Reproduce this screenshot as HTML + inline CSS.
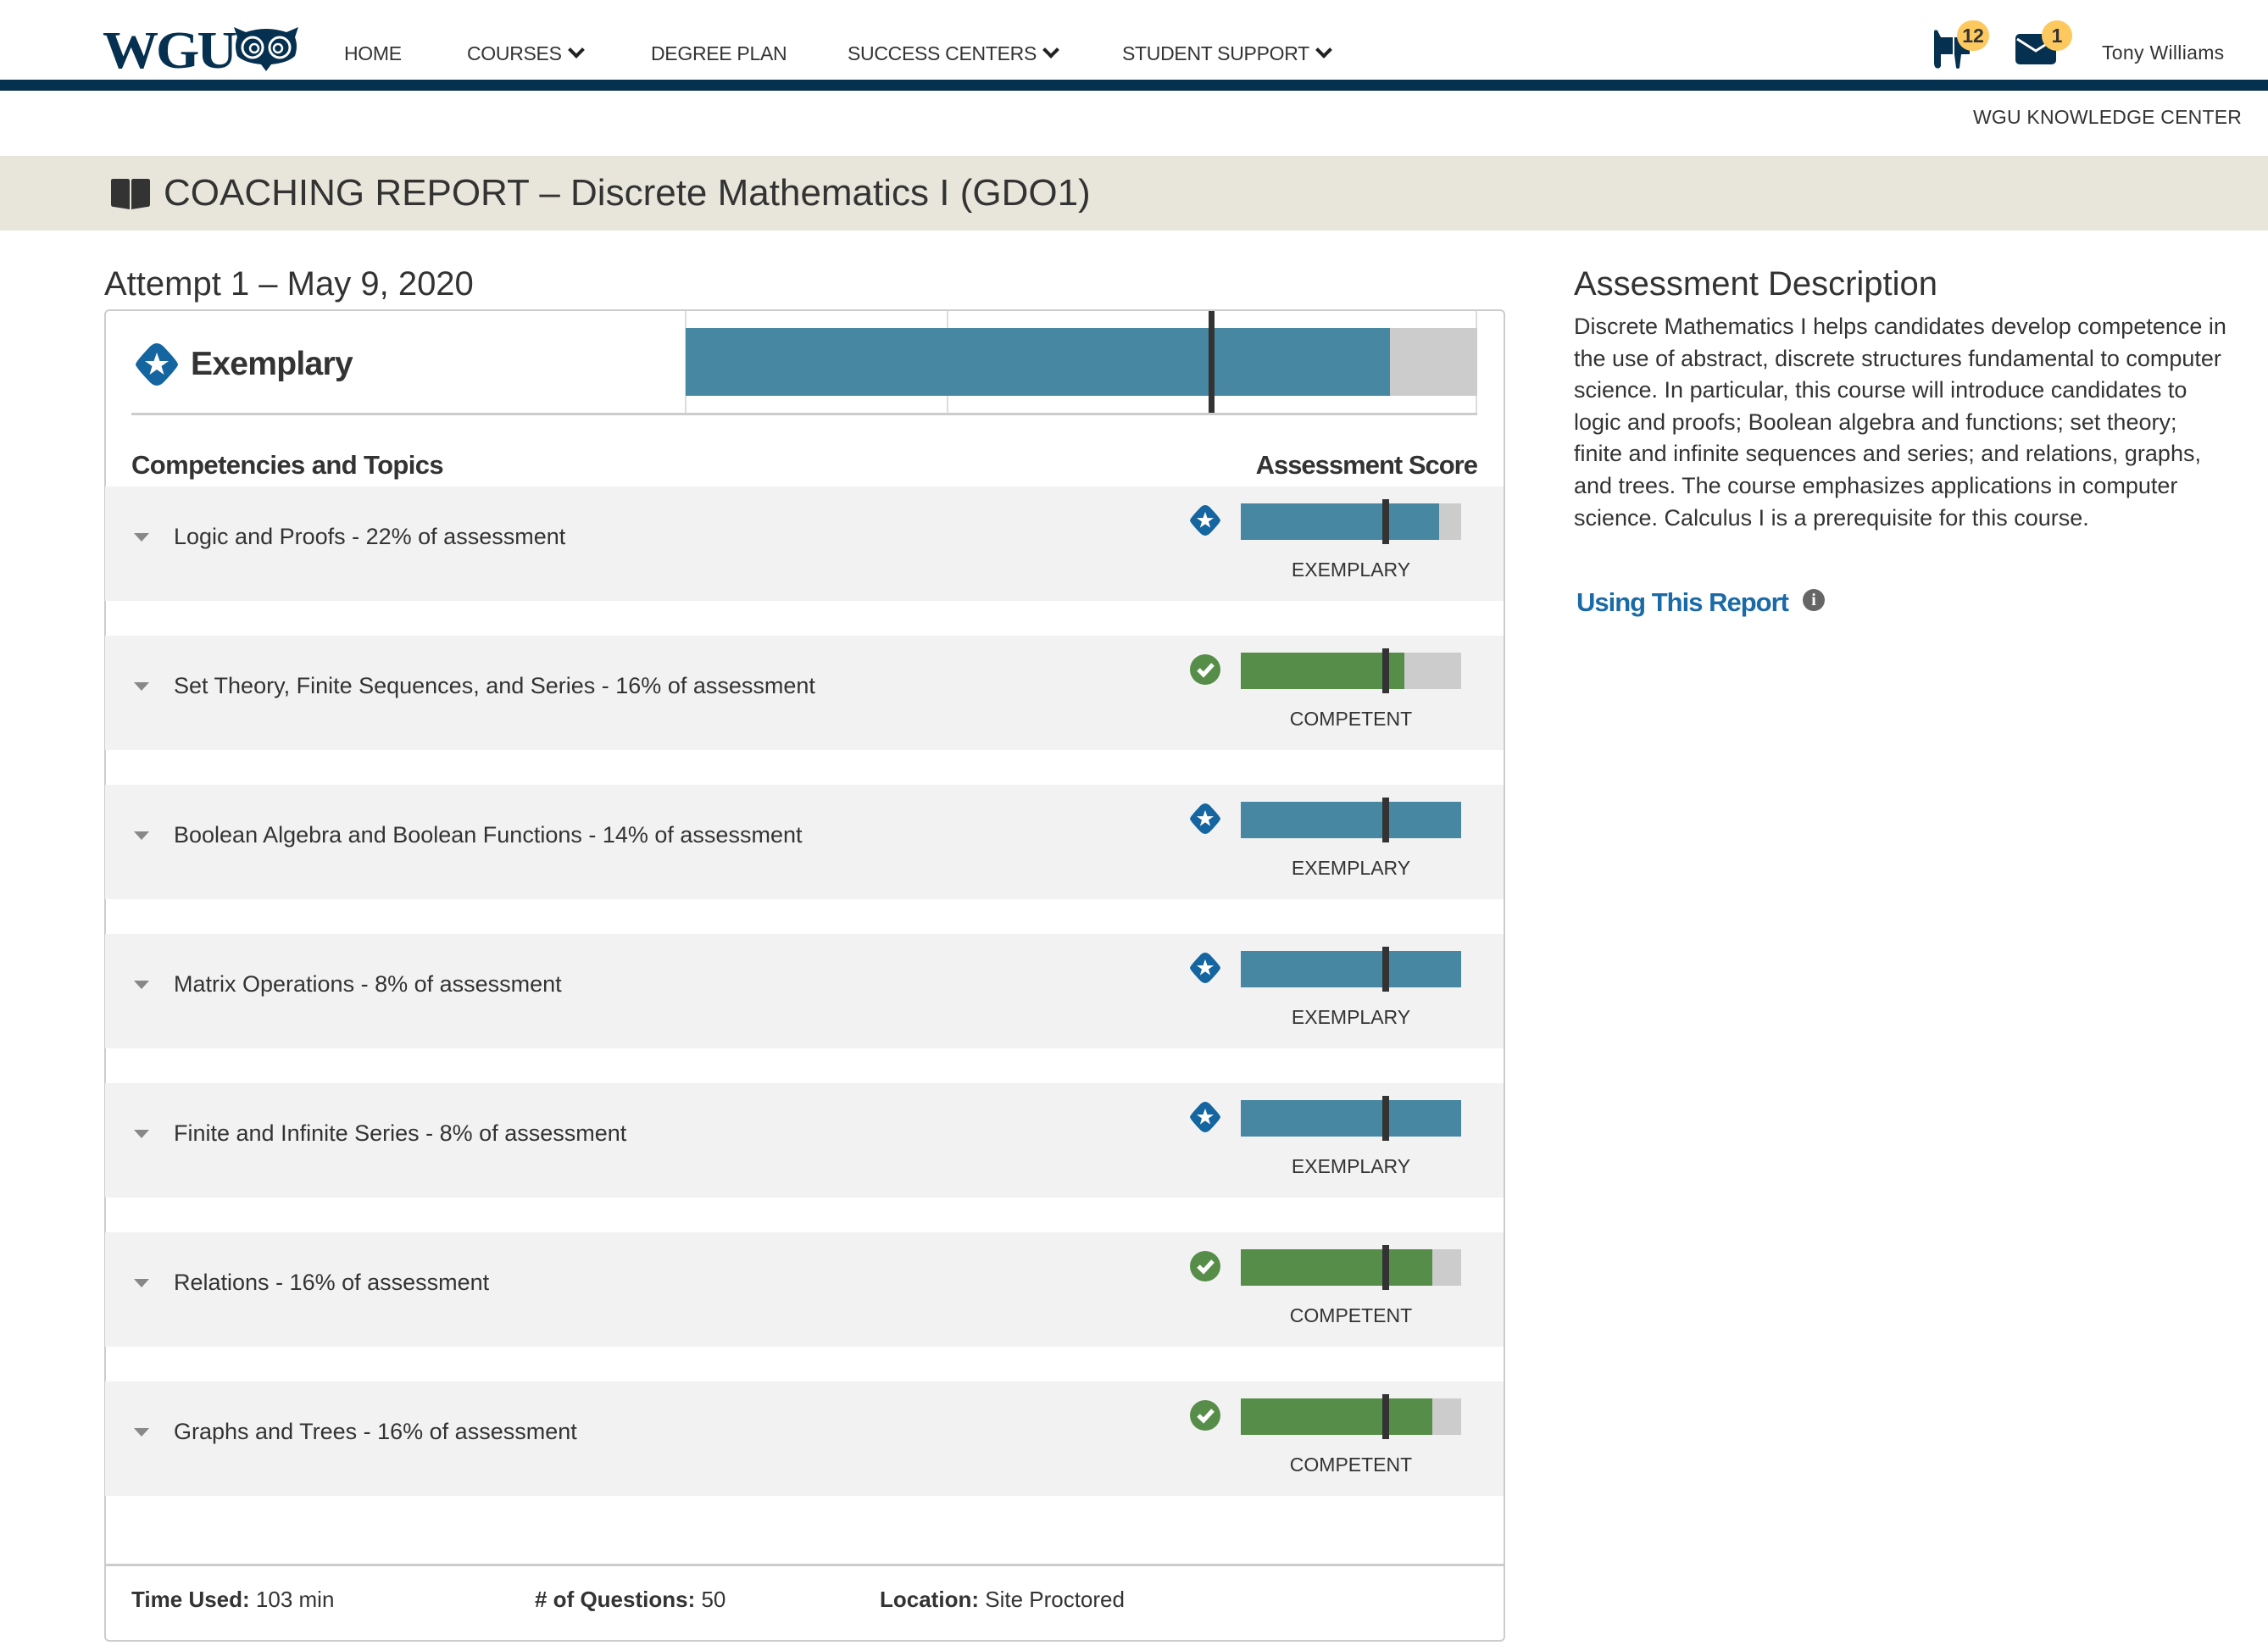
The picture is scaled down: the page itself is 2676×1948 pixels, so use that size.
<!DOCTYPE html>
<html><head><meta charset="utf-8">
<style>
*{margin:0;padding:0;box-sizing:border-box}
body{width:2676px;height:1948px;position:relative;background:#fff;font-family:"Liberation Sans",sans-serif;color:#333;overflow:hidden}
.a{position:absolute;white-space:nowrap}
.nav{font-size:23px;color:#333;top:50px;letter-spacing:-0.3px}
.chev{display:inline-block;width:14px;height:14px;border-right:4px solid #222;border-bottom:4px solid #222;transform:rotate(45deg);margin-left:10px;position:relative;top:-5px}
.row{position:absolute;left:124px;width:1650px;height:135px;background:#f2f2f2}
.row .t{position:absolute;left:81px;top:44px;font-size:27px;letter-spacing:0px;color:#333}
.row .tri{position:absolute;left:34px;top:55px;width:0;height:0;border-left:9px solid transparent;border-right:9px solid transparent;border-top:10px solid #888}
.bar{position:absolute;left:1340px;top:20px;width:260px;height:43px;background:#ccc}
.bar i{position:absolute;left:0;top:0;height:43px;display:block}
.bar b{position:absolute;left:167px;top:-5px;width:8px;height:53px;background:#333}
.lab{position:absolute;left:1340px;width:260px;text-align:center;top:85px;font-size:23px;color:#333;letter-spacing:0px}
.ic{position:absolute;left:1280px;top:22px}
.desc{font-size:27px;line-height:37.6px;letter-spacing:0px;color:#333}
</style></head><body>

<div class="a" style="left:121px;top:22px;font-family:'Liberation Serif',serif;font-weight:900;font-size:66px;color:#05304f;letter-spacing:-3px;transform:scaleY(0.95)">WGU</div>
<svg class="a" style="left:276px;top:30px" width="76" height="54" viewBox="0 0 76 54">
<path d="M0 2 L14 8 Q38 0 62 8 L76 2 L72 14 Q76 24 72 36 Q64 44 44 46 L38 54 L32 46 Q12 44 4 36 Q0 24 4 14 Z" fill="#05304f"/>
<circle cx="22" cy="26" r="12" fill="none" stroke="#fff" stroke-width="3"/><circle cx="54" cy="26" r="12" fill="none" stroke="#fff" stroke-width="3"/>
<circle cx="24" cy="27" r="5" fill="none" stroke="#fff" stroke-width="2.5"/><circle cx="52" cy="27" r="5" fill="none" stroke="#fff" stroke-width="2.5"/>
</svg>
<div class="a nav" style="left:406px">HOME</div>
<div class="a nav" style="left:551px">COURSES<span class="chev"></span></div>
<div class="a nav" style="left:768px">DEGREE PLAN</div>
<div class="a nav" style="left:1000px">SUCCESS CENTERS<span class="chev"></span></div>
<div class="a nav" style="left:1324px">STUDENT SUPPORT<span class="chev"></span></div>

<svg class="a" style="left:2280px;top:34px" width="50" height="48" viewBox="0 0 50 48">
<path d="M2 4 Q2 0 6 2 L10 10 L24 10 L24 30 L10 30 L10 44 Q8 48 4 46 Q2 44 2 40 Z" fill="#05304f"/>
<path d="M26 10 L44 10 L44 30 L34 30 L32 46 Q30 48 28 46 L26 30 Z" fill="#05304f"/>
</svg>
<div class="a" style="left:2309px;top:24px;width:38px;height:36px;border-radius:18px;background:#fdc95e;font-size:23px;font-weight:bold;text-align:center;line-height:36px;color:#333">12</div>
<svg class="a" style="left:2378px;top:40px" width="48" height="36" viewBox="0 0 48 36">
<rect x="0" y="0" width="48" height="36" rx="5" fill="#05304f"/><path d="M2 6 L24 20 L46 6" fill="none" stroke="#fff" stroke-width="3"/>
</svg>
<div class="a" style="left:2409px;top:24px;width:36px;height:36px;border-radius:18px;background:#fdc95e;font-size:23px;font-weight:bold;text-align:center;line-height:36px;color:#333">1</div>
<div class="a" style="left:2480px;top:49px;font-size:23px;color:#333;letter-spacing:0.3px">Tony Williams</div>

<div class="a" style="left:0;top:94px;width:2676px;height:13px;background:#05304f"></div>
<div class="a" style="left:2328px;top:125px;font-size:23px;color:#333;letter-spacing:0.2px">WGU KNOWLEDGE CENTER</div>

<div class="a" style="left:0;top:184px;width:2676px;height:88px;background:#e8e6da"></div>
<svg class="a" style="left:131px;top:211px" width="46" height="36" viewBox="0 0 46 36">
<path d="M0 2 Q0 0 3 0 L20 0 Q22 0 22 3 L22 36 L3 33 Q0 33 0 30 Z M24 3 Q24 0 26 0 L43 0 Q46 0 46 2 L46 30 Q46 33 43 33 L24 36 Z" fill="#333"/>
</svg>
<div class="a" style="left:193px;top:203px;font-size:44px;color:#333;letter-spacing:0px">COACHING REPORT – Discrete Mathematics I (GDO1)</div>

<div class="a" style="left:123px;top:313px;font-size:40px;color:#333;letter-spacing:0px">Attempt 1 – May 9, 2020</div>

<div class="a" style="left:123px;top:365px;width:1653px;height:1572px;border:2px solid #ccc;border-radius:6px"></div>

<svg class="a" style="left:160px;top:405px" width="50" height="50" viewBox="0 0 50 50">
<path d="M25 0 Q30 0 35 6 Q50 22 50 25 Q50 28 35 44 Q30 50 25 50 Q20 50 15 44 Q0 28 0 25 Q0 22 15 6 Q20 0 25 0 Z" fill="#1565a0"/>
<path d="M25 11 L28.5 21 L39 21 L30.5 27 L33.5 37 L25 31 L16.5 37 L19.5 27 L11 21 L21.5 21 Z" fill="#fff"/>
</svg>
<div class="a" style="left:225px;top:408px;font-size:39px;font-weight:bold;color:#333;letter-spacing:-0.7px">Exemplary</div>

<div class="a" style="left:808px;top:367px;width:2px;height:121px;background:#ddd"></div>
<div class="a" style="left:1117px;top:367px;width:2px;height:121px;background:#ddd"></div>
<div class="a" style="left:1741px;top:367px;width:2px;height:121px;background:#ddd"></div>
<div class="a" style="left:809px;top:387px;width:934px;height:80px;background:#ccc"></div>
<div class="a" style="left:809px;top:387px;width:831px;height:80px;background:#4787a2"></div>
<div class="a" style="left:1426px;top:367px;width:7px;height:121px;background:#333"></div>
<div class="a" style="left:155px;top:487px;width:1588px;height:3px;background:#ccc"></div>

<div class="a" style="left:155px;top:531px;font-size:31px;font-weight:bold;color:#333;letter-spacing:-0.6px">Competencies and Topics</div>
<div class="a" style="left:1443px;top:531px;width:300px;text-align:right;font-size:31px;font-weight:bold;color:#333;letter-spacing:-1px">Assessment Score</div>

<svg width="0" height="0" style="position:absolute">
<defs>
<symbol id="star" viewBox="0 0 50 50"><path d="M25 0 Q30 0 35 6 Q50 22 50 25 Q50 28 35 44 Q30 50 25 50 Q20 50 15 44 Q0 28 0 25 Q0 22 15 6 Q20 0 25 0 Z" fill="#1565a0"/><path d="M25 11 L28.5 21 L39 21 L30.5 27 L33.5 37 L25 31 L16.5 37 L19.5 27 L11 21 L21.5 21 Z" fill="#fff"/></symbol>
<symbol id="chk" viewBox="0 0 36 36"><circle cx="18" cy="18" r="18" fill="#568e49"/><path d="M10 18 L16 24 L27 12" fill="none" stroke="#fff" stroke-width="5"/></symbol>
</defs></svg>

<div class="row" style="top:574px"><div class="tri"></div><div class="t">Logic and Proofs - 22% of assessment</div>
<svg class="ic" width="36" height="36"><use href="#star"/></svg>
<div class="bar"><i style="width:234px;background:#4787a2"></i><b></b></div><div class="lab">EXEMPLARY</div></div>

<div class="row" style="top:750px"><div class="tri"></div><div class="t">Set Theory, Finite Sequences, and Series - 16% of assessment</div>
<svg class="ic" width="36" height="36"><use href="#chk"/></svg>
<div class="bar"><i style="width:193px;background:#568e49"></i><b></b></div><div class="lab">COMPETENT</div></div>

<div class="row" style="top:926px"><div class="tri"></div><div class="t">Boolean Algebra and Boolean Functions - 14% of assessment</div>
<svg class="ic" width="36" height="36"><use href="#star"/></svg>
<div class="bar"><i style="width:260px;background:#4787a2"></i><b></b></div><div class="lab">EXEMPLARY</div></div>

<div class="row" style="top:1102px"><div class="tri"></div><div class="t">Matrix Operations - 8% of assessment</div>
<svg class="ic" width="36" height="36"><use href="#star"/></svg>
<div class="bar"><i style="width:260px;background:#4787a2"></i><b></b></div><div class="lab">EXEMPLARY</div></div>

<div class="row" style="top:1278px"><div class="tri"></div><div class="t">Finite and Infinite Series - 8% of assessment</div>
<svg class="ic" width="36" height="36"><use href="#star"/></svg>
<div class="bar"><i style="width:260px;background:#4787a2"></i><b></b></div><div class="lab">EXEMPLARY</div></div>

<div class="row" style="top:1454px"><div class="tri"></div><div class="t">Relations - 16% of assessment</div>
<svg class="ic" width="36" height="36"><use href="#chk"/></svg>
<div class="bar"><i style="width:226px;background:#568e49"></i><b></b></div><div class="lab">COMPETENT</div></div>

<div class="row" style="top:1630px"><div class="tri"></div><div class="t">Graphs and Trees - 16% of assessment</div>
<svg class="ic" width="36" height="36"><use href="#chk"/></svg>
<div class="bar"><i style="width:226px;background:#568e49"></i><b></b></div><div class="lab">COMPETENT</div></div>

<div class="a" style="left:124px;top:1845px;width:1651px;height:3px;background:#ccc"></div>
<div class="a" style="left:155px;top:1872px;font-size:26px;color:#333;letter-spacing:0px"><b>Time Used:</b> 103 min</div>
<div class="a" style="left:631px;top:1872px;font-size:26px;color:#333;letter-spacing:0px"><b># of Questions:</b> 50</div>
<div class="a" style="left:1038px;top:1872px;font-size:26px;color:#333;letter-spacing:0px"><b>Location:</b> Site Proctored</div>

<div class="a" style="left:1857px;top:313px;font-size:40px;color:#333;letter-spacing:0px">Assessment Description</div>
<div class="a desc" style="left:1857px;top:367px">Discrete Mathematics I helps candidates develop competence in<br>the use of abstract, discrete structures fundamental to computer<br>science. In particular, this course will introduce candidates to<br>logic and proofs; Boolean algebra and functions; set theory;<br>finite and infinite sequences and series; and relations, graphs,<br>and trees. The course emphasizes applications in computer<br>science. Calculus I is a prerequisite for this course.</div>
<div class="a" style="left:1860px;top:693px;font-size:31px;font-weight:bold;color:#1a6aa8;letter-spacing:-1px">Using This Report</div>
<div class="a" style="left:2127px;top:695px;width:26px;height:26px;border-radius:13px;background:#666;color:#fff;font-weight:bold;font-size:20px;text-align:center;line-height:26px;font-family:'Liberation Serif',serif">i</div>
</body></html>
